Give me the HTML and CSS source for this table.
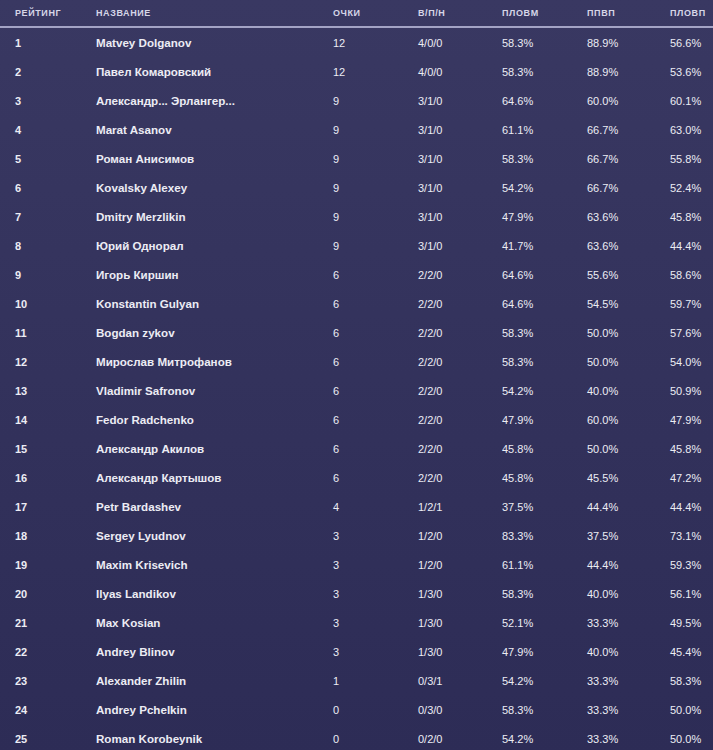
FILE: index.html
```html
<!DOCTYPE html>
<html lang="ru">
<head>
<meta charset="utf-8">
<link rel="stylesheet" href="styles.css">
</head>
<body>
<div class="table">
  <div class="row head">
    <div>Рейтинг</div><div>Название</div><div>Очки</div><div>В/П/Н</div><div>ПЛОВМ</div><div>ППВП</div><div>ПЛОВП</div>
  </div>
  <div class="row"><div class="b">1</div><div class="b">Matvey Dolganov</div><div>12</div><div>4/0/0</div><div>58.3%</div><div>88.9%</div><div>56.6%</div></div>
  <div class="row"><div class="b">2</div><div class="b">Павел Комаровский</div><div>12</div><div>4/0/0</div><div>58.3%</div><div>88.9%</div><div>53.6%</div></div>
  <div class="row"><div class="b">3</div><div class="b">Александр... Эрлангер...</div><div>9</div><div>3/1/0</div><div>64.6%</div><div>60.0%</div><div>60.1%</div></div>
  <div class="row"><div class="b">4</div><div class="b">Marat Asanov</div><div>9</div><div>3/1/0</div><div>61.1%</div><div>66.7%</div><div>63.0%</div></div>
  <div class="row"><div class="b">5</div><div class="b">Роман Анисимов</div><div>9</div><div>3/1/0</div><div>58.3%</div><div>66.7%</div><div>55.8%</div></div>
  <div class="row"><div class="b">6</div><div class="b">Kovalsky Alexey</div><div>9</div><div>3/1/0</div><div>54.2%</div><div>66.7%</div><div>52.4%</div></div>
  <div class="row"><div class="b">7</div><div class="b">Dmitry Merzlikin</div><div>9</div><div>3/1/0</div><div>47.9%</div><div>63.6%</div><div>45.8%</div></div>
  <div class="row"><div class="b">8</div><div class="b">Юрий Однорал</div><div>9</div><div>3/1/0</div><div>41.7%</div><div>63.6%</div><div>44.4%</div></div>
  <div class="row"><div class="b">9</div><div class="b">Игорь Киршин</div><div>6</div><div>2/2/0</div><div>64.6%</div><div>55.6%</div><div>58.6%</div></div>
  <div class="row"><div class="b">10</div><div class="b">Konstantin Gulyan</div><div>6</div><div>2/2/0</div><div>64.6%</div><div>54.5%</div><div>59.7%</div></div>
  <div class="row"><div class="b">11</div><div class="b">Bogdan zykov</div><div>6</div><div>2/2/0</div><div>58.3%</div><div>50.0%</div><div>57.6%</div></div>
  <div class="row"><div class="b">12</div><div class="b">Мирослав Митрофанов</div><div>6</div><div>2/2/0</div><div>58.3%</div><div>50.0%</div><div>54.0%</div></div>
  <div class="row"><div class="b">13</div><div class="b">Vladimir Safronov</div><div>6</div><div>2/2/0</div><div>54.2%</div><div>40.0%</div><div>50.9%</div></div>
  <div class="row"><div class="b">14</div><div class="b">Fedor Radchenko</div><div>6</div><div>2/2/0</div><div>47.9%</div><div>60.0%</div><div>47.9%</div></div>
  <div class="row"><div class="b">15</div><div class="b">Александр Акилов</div><div>6</div><div>2/2/0</div><div>45.8%</div><div>50.0%</div><div>45.8%</div></div>
  <div class="row"><div class="b">16</div><div class="b">Александр Картышов</div><div>6</div><div>2/2/0</div><div>45.8%</div><div>45.5%</div><div>47.2%</div></div>
  <div class="row"><div class="b">17</div><div class="b">Petr Bardashev</div><div>4</div><div>1/2/1</div><div>37.5%</div><div>44.4%</div><div>44.4%</div></div>
  <div class="row"><div class="b">18</div><div class="b">Sergey Lyudnov</div><div>3</div><div>1/2/0</div><div>83.3%</div><div>37.5%</div><div>73.1%</div></div>
  <div class="row"><div class="b">19</div><div class="b">Maxim Krisevich</div><div>3</div><div>1/2/0</div><div>61.1%</div><div>44.4%</div><div>59.3%</div></div>
  <div class="row"><div class="b">20</div><div class="b">Ilyas Landikov</div><div>3</div><div>1/3/0</div><div>58.3%</div><div>40.0%</div><div>56.1%</div></div>
  <div class="row"><div class="b">21</div><div class="b">Max Kosian</div><div>3</div><div>1/3/0</div><div>52.1%</div><div>33.3%</div><div>49.5%</div></div>
  <div class="row"><div class="b">22</div><div class="b">Andrey Blinov</div><div>3</div><div>1/3/0</div><div>47.9%</div><div>40.0%</div><div>45.4%</div></div>
  <div class="row"><div class="b">23</div><div class="b">Alexander Zhilin</div><div>1</div><div>0/3/1</div><div>54.2%</div><div>33.3%</div><div>58.3%</div></div>
  <div class="row"><div class="b">24</div><div class="b">Andrey Pchelkin</div><div>0</div><div>0/3/0</div><div>58.3%</div><div>33.3%</div><div>50.0%</div></div>
  <div class="row"><div class="b">25</div><div class="b">Roman Korobeynik</div><div>0</div><div>0/2/0</div><div>54.2%</div><div>33.3%</div><div>50.0%</div></div>
</div>
</body>
</html>
```

FILE: styles.css
```css
html, body {
  margin: 0;
  padding: 0;
}
body {
  background: linear-gradient(180deg, #393862 0%, #33325c 50%, #2d2c56 100%);
  min-height: 750px;
  font-family: "Liberation Sans", Arial, sans-serif;
  color: #ececf4;
  overflow: hidden;
}
.table {
  display: flex;
  flex-direction: column;
}
.row {
  display: grid;
  grid-template-columns: 81px 237px 85px 84px 85px 83px 43px;
  padding-left: 15px;
  height: 29px;
  align-items: center;
  font-size: 11px;
}
.row > div {
  white-space: nowrap;
}
.row.head {
  height: 26px;
  border-bottom: 2px solid #a3a3c4;
  font-size: 9px;
  letter-spacing: 0.6px;
  font-weight: bold;
  text-transform: uppercase;
  color: #d6d6e8;
}
.b {
  font-weight: bold;
}
.row > .b:nth-child(2) {
  font-size: 11.6px;
}
```
